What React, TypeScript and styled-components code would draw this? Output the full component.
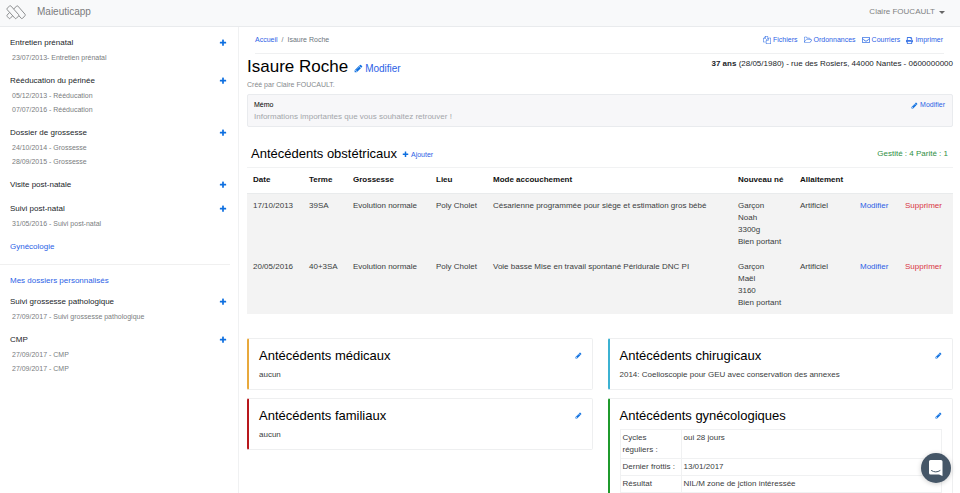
import React from "react";
import styled, { createGlobalStyle } from "styled-components";
import { FaRegEnvelope, FaPrint } from "react-icons/fa";

const GlobalStyle = createGlobalStyle`
  * { box-sizing: border-box; }
  body {
    margin: 0;
    background: #fff;
    color: #212529;
    font-family: "Liberation Sans", Arial, sans-serif;
    font-size: 8px;
    line-height: 12px;
    overflow: hidden;
  }
  button { font: inherit; color: inherit; background: none; border: 0; padding: 0; cursor: pointer; }
  a { text-decoration: none; }
  h1, h2, h3, p, ul, ol { margin: 0; padding: 0; font-weight: 400; list-style: none; }
`;

const Glyph = styled.svg<{ $size?: number }>`
  width: ${(p) => p.$size ?? 8}px;
  height: ${(p) => p.$size ?? 8}px;
  flex: none;
  fill: currentColor;
`;

const PlusIcon = ({ size }: { size?: number }) => (
  <Glyph $size={size} viewBox="0 0 1792 1792" aria-hidden="true">
    <path d="M1600 736v192q0 40-28 68t-68 28h-416v416q0 40-28 68t-68 28h-192q-40 0-68-28t-28-68v-416h-416q-40 0-68-28t-28-68v-192q0-40 28-68t68-28h416v-416q0-40 28-68t68-28h192q40 0 68 28t28 68v416h416q40 0 68 28t28 68z" />
  </Glyph>
);
const PencilIcon = ({ size }: { size?: number }) => (
  <Glyph $size={size} viewBox="0 0 1792 1792" aria-hidden="true">
    <path d="M491 1536l91-91-235-235-91 91v107h128v128h107zm523-928q0-22-22-22-10 0-17 7l-542 542q-7 7-7 17 0 22 22 22 10 0 17-7l542-542q7-7 7-17zm-54-192l416 416-832 832h-416v-416zm683 96q0 53-37 90l-166 166-416-416 166-165q36-38 90-38 53 0 91 38l235 234q37 39 37 91z" />
  </Glyph>
);
const FilesIcon = () => (
  <Glyph viewBox="0 0 1792 1792" aria-hidden="true">
    <path d="M1696 384q40 0 68 28t28 68v1216q0 40-28 68t-68 28h-960q-40 0-68-28t-28-68v-288h-544q-40 0-68-28t-28-68v-672q0-40 20-88t48-76l408-408q28-28 76-48t88-20h416q40 0 68 28t28 68v328q68-40 128-40h416zm-544 213l-299 299h299v-299zm-640-384l-299 299h299v-299zm196 647l316-316v-416h-384v416q0 40-28 68t-68 28h-416v640h512v-256q0-40 20-88t48-76zm956 804v-1152h-384v416q0 40-28 68t-68 28h-416v640h896z" />
  </Glyph>
);
const FolderIcon = () => (
  <Glyph viewBox="64 0 1920 1792" aria-hidden="true">
    <path d="M1845 931q0-35-53-35h-1088q-40 0-85.500 21.500t-71.500 52.500l-294 363q-18 24-18 40 0 35 53 35h1088q40 0 86-22t71-53l294-363q18-22 18-39zm-1141-163h768v-160q0-40-28-68t-68-28h-576q-40 0-68-28t-28-68v-64q0-40-28-68t-68-28h-320q-40 0-68 28t-28 68v853l256-315q44-53 116-87.500t140-34.500zm1269 163q0 62-46 120l-295 363q-43 53-116 87.500t-140 34.500h-1088q-92 0-158-66t-66-158v-960q0-92 66-158t158-66h320q92 0 158 66t66 158v32h544q92 0 158 66t66 158v160h192q54 0 99 24.500t67 70.500q15 32 15 68z" />
  </Glyph>
);

const Navbar = styled.header`
  display: flex;
  align-items: center;
  justify-content: space-between;
  height: 27px;
  padding: 0 15px 2px 6px;
  background: #f8f9fa;
  border-bottom: 1px solid #e9ebed;
  color: #808182;
`;
const Brand = styled.a`
  display: flex;
  align-items: center;
  gap: 11px;
  color: #7b7c7d;
  font-size: 10px;
`;
const Logo = styled.svg`
  width: 20px;
  height: 15px;
  fill: none;
  stroke: #8d8f91;
  stroke-width: 1;
`;
const UserMenu = styled.button`
  display: flex;
  align-items: center;
  gap: 4px;
`;
const Caret = styled.span`
  border: 3px solid transparent;
  border-top-color: #666;
  border-bottom: 0;
`;

const Page = styled.div`
  display: flex;
  align-items: stretch;
`;
const Sidebar = styled.nav`
  flex: none;
  width: 239px;
  min-height: calc(100vh - 27px);
  padding-top: 8px;
  border-right: 1px solid #f0f1f2;
`;
const Group = styled.section<{ $tight?: boolean }>`
  padding: 0 11px ${(p) => (p.$tight ? 5 : 8)}px 10px;
`;
const GroupHead = styled.div`
  display: flex;
  align-items: center;
  justify-content: space-between;
  height: 16px;
`;
const GroupTitle = styled.h2`
  font-size: 8px;
  a { color: #2c5fe6; }
`;
const AddButton = styled.button`
  display: flex;
  color: #0d6fe0;
`;
const Visit = styled.li`
  height: 14px;
  padding-left: 2px;
  line-height: 14px;
  font-size: 7px;
  a { color: #7a7d80; }
`;
const Divider = styled.hr`
  margin: 1px 8px 8px 0;
  border: 0;
  border-top: 1px solid #f0f0f0;
`;

const Main = styled.main`
  flex: 1;
  min-width: 0;
  padding: 0 7px 0 8px;
`;
const Topline = styled.div`
  display: flex;
  align-items: center;
  justify-content: space-between;
  height: 27px;
  margin: 0 9px 0 8px;
  padding-right: 1px;
  border-bottom: 1px solid #eff0f1;
  font-size: 7px;
  color: #6c757d;
`;
const Crumbs = styled.ol`
  display: flex;
  gap: 4px;
`;
const Actions = styled.div`
  display: flex;
  gap: 6px;
`;
const Link = styled.a<{ $tone?: "danger" }>`
  display: inline-flex;
  align-items: center;
  gap: 2px;
  color: ${(p) => (p.$tone === "danger" ? "#d93645" : "#2c5fe6")};
  svg { color: #0d6fe0; }
`;
const ActionLink = styled(Link)`
  svg { color: #3f78e6; }
`;
const Identity = styled.div`
  display: flex;
  justify-content: space-between;
  align-items: flex-start;
`;
const NameLine = styled.div`
  display: flex;
  align-items: center;
  gap: 6px;
  height: 25px;
`;
const Name = styled.h1`
  font-size: 17px;
  color: #000;
`;
const EditName = styled(Link)`
  padding-top: 4px;
  font-size: 10px;
`;
const Contact = styled.p`
  padding-top: 4px;
`;
const Author = styled.p`
  font-size: 7px;
  color: #85898d;
`;
const Memo = styled.section`
  display: flex;
  justify-content: space-between;
  margin-top: 3px;
  padding: 4px 7px 3px 6px;
  background: #f7f7f9;
  border: 1px solid #e9ebee;
  border-radius: 2px;
  min-height: 33px;
`;
const MemoTitle = styled.h2`
  font-size: 7px;
  color: #000;
`;
const MemoText = styled.p`
  color: #a3a6aa;
`;
const MemoLink = styled(Link)`
  align-self: flex-start;
  font-size: 7px;
`;
const History = styled.div`
  display: flex;
  align-items: center;
  gap: 5px;
  height: 27px;
  margin-top: 13px;
  padding: 0 5px 0 4px;
  font-size: 7px;
`;
const HistoryTitle = styled.h2`
  font-size: 13px;
  color: #000;
`;
const AddLink = styled(Link)`
  padding-top: 2px;
`;
const Counts = styled.p`
  flex: 1;
  text-align: right;
  font-size: 8px;
  color: #2f8f43;
`;

const Births = styled.table`
  width: 100%;
  table-layout: fixed;
  border-collapse: collapse;
  border-top: 1px solid #f1f2f3;
  th, td { padding: 6px 6px 5px; text-align: left; vertical-align: top; white-space: nowrap; }
  th { height: 26px; border-bottom: 1px solid #e9ebec; color: #111; }
  td { background: #f3f3f3; color: #3a3d40; }
  tbody tr:not(:last-child) td { height: 61px; }
`;
const Col = styled.col<{ $w?: number }>`
  width: ${(p) => (p.$w ? `${p.$w}px` : "auto")};
`;

const Board = styled.div`
  display: grid;
  grid-template-columns: 1fr 1fr;
  gap: 15px;
  margin-top: 24px;
`;
const Column = styled.div`
  display: flex;
  flex-direction: column;
  gap: 8px;
`;
const Card = styled.section<{ $accent: string }>`
  padding: 8px 10px;
  border: 1px solid #eeeff0;
  border-left: 2px solid ${(p) => p.$accent};
  border-radius: 2px;
  color: #3a3d40;
`;
const CardHead = styled.div`
  display: flex;
  align-items: center;
  justify-content: space-between;
  height: 18px;
  margin-bottom: 4px;
`;
const CardTitle = styled.h3`
  font-size: 13px;
  color: #000;
`;
const EditButton = styled.button`
  display: flex;
  color: #0d6fe0;
`;
const Details = styled.table`
  width: 100%;
  border-collapse: collapse;
  th, td {
    padding: 2px;
    border: 1px solid #f0f1f2;
    font-weight: 400;
    text-align: left;
    vertical-align: top;
  }
  th { width: 61px; }
`;

const Chat = styled.button`
  position: fixed;
  right: 9px;
  bottom: 10px;
  display: flex;
  align-items: center;
  justify-content: center;
  width: 30px;
  height: 30px;
  border-radius: 50%;
  background: #455667;
  box-shadow: 0 1px 5px rgba(0, 0, 0, 0.2);
`;

type Folder = { title: string; visits: string[] };

const folders: Folder[] = [
  { title: "Entretien prénatal", visits: ["23/07/2013- Entretien prénatal"] },
  { title: "Rééducation du périnée", visits: ["05/12/2013 - Rééducation", "07/07/2016 - Rééducation"] },
  { title: "Dossier de grossesse", visits: ["24/10/2014 - Grossesse", "28/09/2015 - Grossesse"] },
  { title: "Visite post-natale", visits: [] },
  { title: "Suivi post-natal", visits: ["31/05/2016 - Suivi post-natal"] },
];
const customFolders: Folder[] = [
  { title: "Suivi grossesse pathologique", visits: ["27/09/2017 - Suivi grossesse pathologique"] },
  { title: "CMP", visits: ["27/09/2017 - CMP", "27/09/2017 - CMP"] },
];
const births = [
  {
    date: "17/10/2013",
    term: "39SA",
    mode: "Césarienne programmée pour siège et estimation gros bébé",
    baby: ["Garçon", "Noah", "3300g", "Bien portant"],
  },
  {
    date: "20/05/2016",
    term: "40+3SA",
    mode: "Voie basse Mise en travail spontané Péridurale DNC PI",
    baby: ["Garçon", "Maël", "3160", "Bien portant"],
  },
];
const gyneco = [
  ["Cycles réguliers :", "oui 28 jours"],
  ["Dernier frottis :", "13/01/2017"],
  ["Résultat", "NIL/M zone de jction intéressée"],
];

const FolderGroup = ({ title, visits }: Folder) => (
  <Group>
    <GroupHead>
      <GroupTitle>{title}</GroupTitle>
      <AddButton aria-label={`Ajouter : ${title}`}><PlusIcon /></AddButton>
    </GroupHead>
    <ul>
      {visits.map((v, i) => (
        <Visit key={i}><a href="#visite">{v}</a></Visit>
      ))}
    </ul>
  </Group>
);

const LinkGroup = ({ title, tight }: { title: string; tight?: boolean }) => (
  <Group $tight={tight}>
    <GroupHead>
      <GroupTitle><a href="#dossiers">{title}</a></GroupTitle>
    </GroupHead>
  </Group>
);

const HistoryCard = ({ title, accent, children }: { title: string; accent: string; children: React.ReactNode }) => (
  <Card $accent={accent}>
    <CardHead>
      <CardTitle>{title}</CardTitle>
      <EditButton aria-label={`Modifier : ${title}`}><PencilIcon size={7} /></EditButton>
    </CardHead>
    {children}
  </Card>
);

export default function App() {
  return (
    <>
      <GlobalStyle />
      <Navbar>
        <Brand href="#accueil">
          <Logo viewBox="0 0 20 15" aria-hidden="true">
            <path d="M1.200 3.200 3.600 1Q4.300.4 5 1.100L12.600 9.600Q13.200 10.300 12.600 11L10.400 13.300Q9.700 14 9 13.300L1.200 4.700Q.6 4 1.200 3.200Z" />
            <path d="M7.700 4.100 10.500 1.100Q11.200.4 11.900 1.100L19 9.200Q19.600 10 19 10.700L16.600 13.300Q15.900 14 15.200 13.300L12.800 10.600" />
            <path d="M3.700 7.400 1.200 10Q.6 10.700 1.200 11.400L2.900 13.300Q3.600 14 4.300 13.300L6.500 10.900" />
          </Logo>
          Maieuticapp
        </Brand>
        <UserMenu>Claire FOUCAULT <Caret /></UserMenu>
      </Navbar>
      <Page>
        <Sidebar>
          {folders.map((f) => <FolderGroup key={f.title} {...f} />)}
          <LinkGroup title="Gynécologie" />
          <Divider />
          <LinkGroup title="Mes dossiers personnalisés" tight />
          {customFolders.map((f) => <FolderGroup key={f.title} {...f} />)}
        </Sidebar>
        <Main>
          <Topline>
            <Crumbs>
              <li><Link href="#accueil">Accueil</Link></li>
              <li>/</li>
              <li>Isaure Roche</li>
            </Crumbs>
            <Actions>
              <ActionLink href="#fichiers"><FilesIcon />Fichiers</ActionLink>
              <ActionLink href="#ordonnances"><FolderIcon />Ordonnances</ActionLink>
              <ActionLink href="#courriers"><FaRegEnvelope size={8} />Courriers</ActionLink>
              <ActionLink href="#imprimer"><FaPrint size={7} />Imprimer</ActionLink>
            </Actions>
          </Topline>
          <Identity>
            <NameLine>
              <Name>Isaure Roche</Name>
              <EditName href="#modifier"><PencilIcon size={9} />Modifier</EditName>
            </NameLine>
            <Contact><b>37 ans</b> (28/05/1980) - rue des Rosiers, 44000 Nantes - 0600000000</Contact>
          </Identity>
          <Author>Créé par Claire FOUCAULT.</Author>
          <Memo>
            <div>
              <MemoTitle>Mémo</MemoTitle>
              <MemoText>Informations importantes que vous souhaitez retrouver !</MemoText>
            </div>
            <MemoLink href="#memo"><PencilIcon size={7} />Modifier</MemoLink>
          </Memo>
          <History>
            <HistoryTitle>Antécédents obstétricaux</HistoryTitle>
            <AddLink href="#ajouter"><PlusIcon size={7} />Ajouter</AddLink>
            <Counts>Gestité : 4 Parité : 1</Counts>
          </History>
          <Births>
            <colgroup>
              <Col $w={56} /><Col $w={44} /><Col $w={83} /><Col $w={57} /><Col />
              <Col $w={62} /><Col $w={60} /><Col $w={45} /><Col $w={54} />
            </colgroup>
            <thead>
              <tr>
                <th>Date</th><th>Terme</th><th>Grossesse</th><th>Lieu</th><th>Mode accouchement</th>
                <th>Nouveau né</th><th>Allaitement</th><th /><th />
              </tr>
            </thead>
            <tbody>
              {births.map((b) => (
                <tr key={b.date}>
                  <td>{b.date}</td>
                  <td>{b.term}</td>
                  <td>Evolution normale</td>
                  <td>Poly Cholet</td>
                  <td>{b.mode}</td>
                  <td>{b.baby.map((line) => <div key={line}>{line}</div>)}</td>
                  <td>Artificiel</td>
                  <td><Link href="#modifier">Modifier</Link></td>
                  <td><Link href="#supprimer" $tone="danger">Supprimer</Link></td>
                </tr>
              ))}
            </tbody>
          </Births>
          <Board>
            <Column>
              <HistoryCard title="Antécédents médicaux" accent="#e8a93c"><p>aucun</p></HistoryCard>
              <HistoryCard title="Antécédents familiaux" accent="#b8181d"><p>aucun</p></HistoryCard>
            </Column>
            <Column>
              <HistoryCard title="Antécédents chirugicaux" accent="#3cb2d2">
                <p>2014: Coelioscopie pour GEU avec conservation des annexes</p>
              </HistoryCard>
              <HistoryCard title="Antécédents gynécologiques" accent="#1f9a2c">
                <Details>
                  <tbody>
                    {gyneco.map(([k, v]) => (
                      <tr key={k}><th scope="row">{k}</th><td>{v}</td></tr>
                    ))}
                  </tbody>
                </Details>
              </HistoryCard>
            </Column>
          </Board>
        </Main>
      </Page>
      <Chat aria-label="Ouvrir la messagerie">
        <svg width="16" height="18" viewBox="0 0 16 18" aria-hidden="true">
          <path d="M2.500 1h10.500q1.500 0 1.500 1.500V17l-3.500-1.500H2.500Q1 15.500 1 14V2.500Q1 1 2.500 1Z" fill="#fff" />
          <path d="M3.500 11.600q4.300 2.800 8.500 0" fill="none" stroke="#455667" strokeLinecap="round" />
        </svg>
      </Chat>
    </>
  );
}
